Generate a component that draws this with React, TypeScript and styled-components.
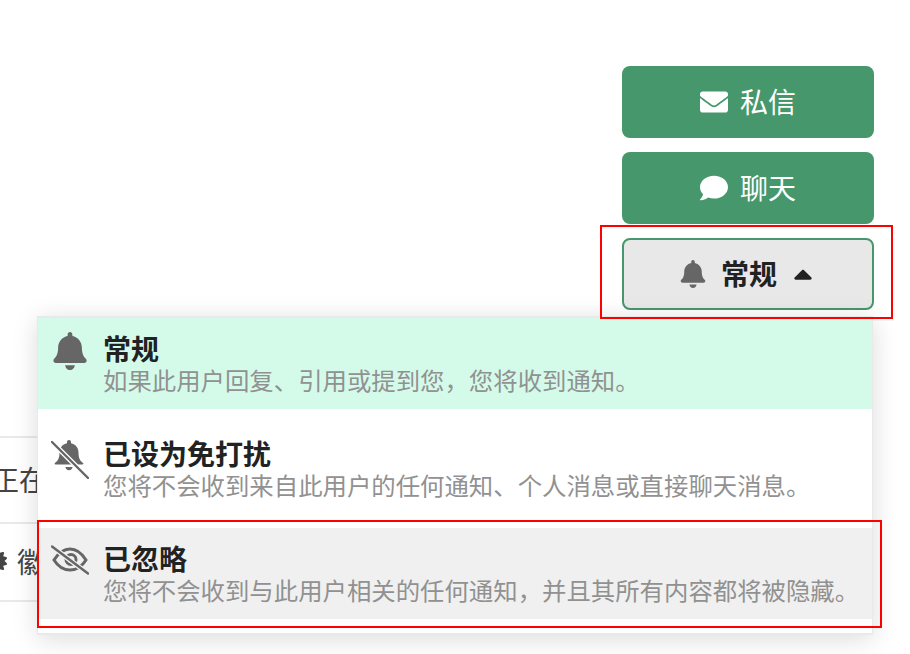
import { ReactNode } from 'react'
import { FaBell, FaCaretUp, FaCertificate, FaComment, FaEnvelope } from 'react-icons/fa'
import styled, { createGlobalStyle } from 'styled-components'

const GlobalStyle = createGlobalStyle`
    html, body {
        margin: 0;
        padding: 0;
        background: #fff;
    }
    body {
        font-family: "Liberation Sans", "Noto Sans CJK SC", sans-serif;
        color: #222;
    }
`

const Page = styled.div`
    position: relative;
    width: 910px;
    height: 654px;
    overflow: hidden;
    display: flex;
    flex-direction: column;
    padding-top: 66px;
    box-sizing: border-box;
`

const Actions = styled.div`
    align-self: flex-end;
    margin-right: 36px;
    width: 252px;
    display: flex;
    flex-direction: column;
    gap: 14px;
`

const ActionButton = styled.button<{ $open?: boolean }>`
    height: 72px;
    box-sizing: border-box;
    display: flex;
    align-items: center;
    justify-content: center;
    gap: ${({ $open }) => ($open ? 14 : 12)}px;
    font: inherit;
    font-size: 28px;
    font-weight: ${({ $open }) => ($open ? 700 : 400)};
    color: ${({ $open }) => ($open ? '#222' : '#fff')};
    background: ${({ $open }) => ($open ? '#e8e8e8' : '#46976b')};
    border: ${({ $open }) => ($open ? '2px solid #46976b' : '0')};
    border-radius: 8px;
    padding: ${({ $open }) => ($open ? '0 0 0 1px' : '0')};

    svg {
        font-size: 28px;
        color: ${({ $open }) => ($open ? '#666' : '#fff')};
    }
`

const ButtonLabel = styled.span`
    margin-bottom: 3px;
`

const Caret = styled(FaCaretUp)`
    && {
        color: #222;
        font-size: 30px;
        margin-left: -3px;
    }
`

const BackgroundList = styled.div`
    margin-top: 126px;
    width: 120px;
    border-top: 2px solid #e9e9e9;
`

const BackgroundRow = styled.div<{ $height: number; $shift: number }>`
    height: ${({ $height }) => $height}px;
    box-sizing: border-box;
    display: flex;
    align-items: center;
    gap: 10px;
    padding-bottom: 2px;
    margin-left: ${({ $shift }) => $shift}px;
    font-size: 28px;
    color: #444;
    white-space: nowrap;
`

const Divider = styled.div`
    border-top: 2px solid #e9e9e9;
`

const Menu = styled.div`
    position: absolute;
    top: 316px;
    left: 37px;
    width: 836px;
    box-sizing: border-box;
    background: #fff;
    border: 2px solid #e9e9e9;
    border-right-width: 1px;
    border-left-width: 1px;
    box-shadow: 0 4px 24px rgba(0, 0, 0, 0.14);
    display: flex;
    flex-direction: column;
    gap: 14px;
    padding-bottom: 14px;
`

const MenuRow = styled.div<{ $tone?: 'active' | 'hover' }>`
    height: 91px;
    box-sizing: border-box;
    display: flex;
    padding: 15px 0 0 14px;
    background: ${({ $tone }) => ($tone === 'active' ? '#d4fbea' : $tone === 'hover' ? '#f0f0f0' : 'transparent')};
`

const IconSlot = styled.div`
    width: 36px;
    height: 36px;
    margin-right: 15px;
    flex-shrink: 0;
    display: flex;
    align-items: center;
    justify-content: center;
    color: #666;
    font-size: 38px;
`

const RowText = styled.div`
    display: flex;
    flex-direction: column;
    margin-top: 2px;
    white-space: nowrap;
`

const RowTitle = styled.div`
    font-size: 28px;
    font-weight: 700;
    line-height: 32px;
    color: #222;
`

const RowDescription = styled.div`
    font-size: 24.4px;
    line-height: 30px;
    color: #919191;
`

const SlashedSvg = styled.svg<{ $nudge: number }>`
    flex-shrink: 0;
    margin-top: ${({ $nudge }) => $nudge}px;
`

const Highlight = styled.div<{ $top: number; $left: number; $width: number; $height: number }>`
    position: absolute;
    top: ${({ $top }) => $top}px;
    left: ${({ $left }) => $left}px;
    width: ${({ $width }) => $width}px;
    height: ${({ $height }) => $height}px;
    box-sizing: border-box;
    border: 2px solid #f00;
    pointer-events: none;
`

const BellSlashIcon = () => (
    <SlashedSvg $nudge={6} width="38" height="40" viewBox="0 0 38 40">
        <path fill="#666" d="M18 1c1.2 0 2 .8 2 2v1.2c4.500 .9 7.500 4.500 7.500 9.300 0 6 1.500 8 4.500 10.500 .8 .7 .3 1.500-.5 1.500H4.500c-.8 0-1.300-.8-.5-1.500C7 21.500 8.500 19.500 8.500 13.500c0-4.800 3-8.400 7.500-9.300V3c0-1.200 .8-2 2-2z" />
        <path fill="#666" d="M14.500 28h7c0 2-1.500 3.200-3.500 3.200s-3.500-1.200-3.500-3.200z" />
        <line x1="1" y1="3" x2="37" y2="39" stroke="#fff" strokeWidth="5" />
        <line x1="1" y1="3" x2="37" y2="39" stroke="#666" strokeWidth="2.4" strokeLinecap="round" />
    </SlashedSvg>
)

const EyeSlashIcon = () => (
    <SlashedSvg $nudge={-2} width="38" height="30" viewBox="0 0 38 30">
        <path fill="none" stroke="#666" strokeWidth="3" d="M3 15C8 7 13 4 19 4s11 3 16 11c-5 8-10 10-16 10S8 23 3 15z" />
        <circle cx="20" cy="14.500" r="5" fill="none" stroke="#666" strokeWidth="3" />
        <line x1="1" y1="1.500" x2="37" y2="28.500" stroke="#f0f0f0" strokeWidth="5" />
        <line x1="1" y1="1.500" x2="37" y2="28.500" stroke="#666" strokeWidth="2.400" strokeLinecap="round" />
    </SlashedSvg>
)

interface OptionProps {
    icon: ReactNode;
    title: string;
    description: string;
    tone?: 'active' | 'hover';
}

const Option = ({ icon, title, description, tone }: OptionProps) => (
    <MenuRow $tone={tone}>
        <IconSlot>{icon}</IconSlot>
        <RowText>
            <RowTitle>{title}</RowTitle>
            <RowDescription>{description}</RowDescription>
        </RowText>
    </MenuRow>
)

const App = () => {
    return (
        <Page>
            <GlobalStyle />
            <Actions>
                <ActionButton><FaEnvelope /><ButtonLabel>私信</ButtonLabel></ActionButton>
                <ActionButton><FaComment /><ButtonLabel>聊天</ButtonLabel></ActionButton>
                <ActionButton $open><FaBell /><ButtonLabel>常规</ButtonLabel><Caret /></ActionButton>
            </Actions>
            <BackgroundList>
                <BackgroundRow $height={84} $shift={-9}>正在</BackgroundRow>
                <Divider />
                <BackgroundRow $height={76} $shift={-17}><FaCertificate size={24} />徽章</BackgroundRow>
                <Divider />
            </BackgroundList>
            <Menu>
                <Option tone="active" icon={<FaBell />} title="常规" description="如果此用户回复、引用或提到您，您将收到通知。" />
                <Option icon={<BellSlashIcon />} title="已设为免打扰" description="您将不会收到来自此用户的任何通知、个人消息或直接聊天消息。" />
                <Option tone="hover" icon={<EyeSlashIcon />} title="已忽略" description="您将不会收到与此用户相关的任何通知，并且其所有内容都将被隐藏。" />
            </Menu>
            <Highlight $top={225} $left={600} $width={293} $height={94} />
            <Highlight $top={520} $left={37} $width={845} $height={108} />
        </Page>
    )
}

export default App
